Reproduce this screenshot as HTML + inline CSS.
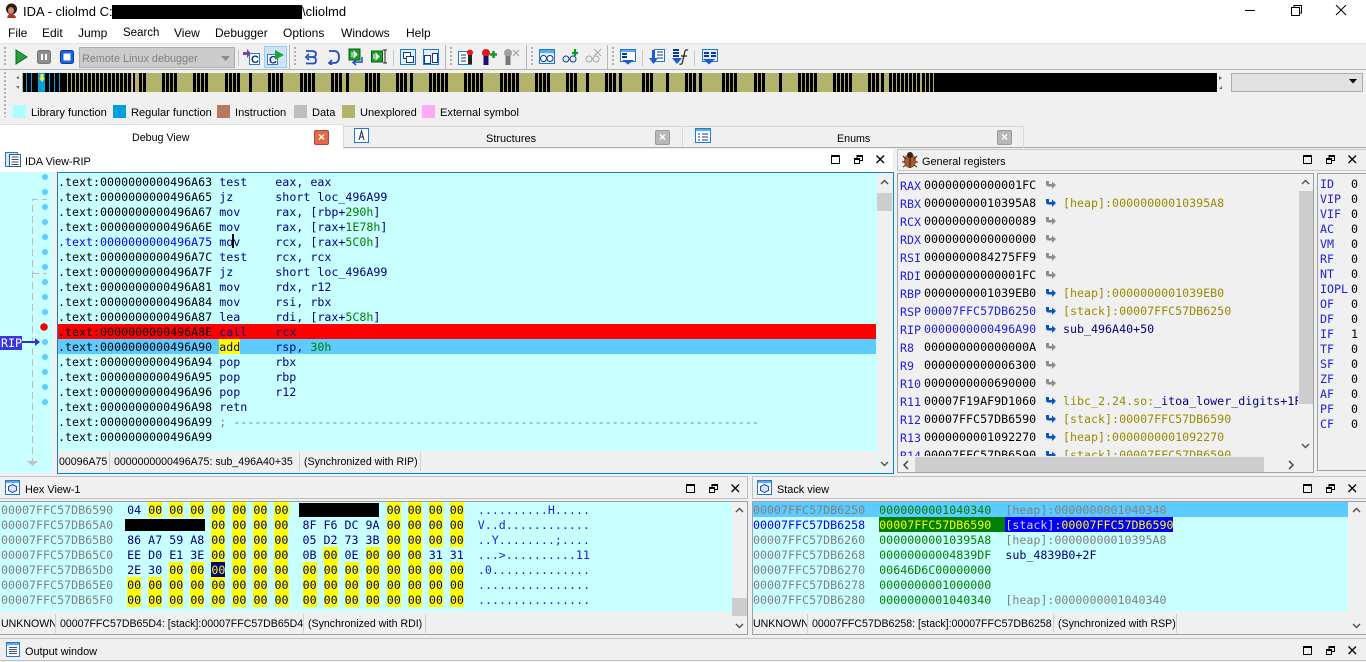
<!DOCTYPE html>
<html><head><meta charset="utf-8"><title>IDA</title>
<style>
html,body{margin:0;padding:0;background:#f0f0f0;overflow:hidden}
body{width:1366px;height:662px;position:relative;font:12px "Liberation Sans",sans-serif;color:#000}
.a,.t,svg,pre{position:absolute}
.t{white-space:nowrap;line-height:14px}
.s{font-size:10.600px}
.h{font-size:10.900px}
.l{font-size:11.100px}
pre{margin:0;font:11.65px/15px "DejaVu Sans Mono",monospace;color:#000}
pre i{font-style:normal;color:#808080}
pre u{text-decoration:none;color:#000080}
pre s{text-decoration:none;color:#008000}
pre b{font-weight:normal;background:#ff0;color:#000080;display:inline-block;height:15px;vertical-align:top;position:relative;top:-1px;line-height:17px}
pre em{font-style:normal;color:#2020e0}
pre q{quotes:none;color:#998a00}
.bar{position:absolute;top:0;height:19px;background:repeating-linear-gradient(90deg,#000 0 3px,#b3b36b 3px 4px)}
.bk{position:absolute;top:0;height:19px;background:#000}
.sq{position:absolute;top:105px;width:13px;height:13px}
.sep{position:absolute;top:50px;width:1px;height:16px;background:#c8c8c8}
.vb{position:absolute;top:45px;width:1px;height:24px;background:#b8b8b8}
.grip{position:absolute;width:2px;background:repeating-linear-gradient(180deg,#b0b0b0 0 2px,transparent 2px 4px)}
.cl{position:absolute;width:13px;height:13px;border:1px solid #9a9a9a;background:#b8b8b8;border-radius:2px;color:#fff;font:bold 12px/13px "Liberation Sans",sans-serif;text-align:center}
.sc{position:absolute;background:#f0f0f0}
.th{position:absolute;background:#cdcdcd}
.st{position:absolute;width:1px;background:#d0d0d0}
</style></head><body>
<svg width="0" height="0" style="left:0;top:0">
<defs>
<g id="mx" fill="none" stroke="#000"><rect x=".5" y=".5" width="8" height="8"/><path d="M0 1.500h9" stroke-width="1"/></g>
<g id="rs" fill="none" stroke="#000"><rect x=".5" y="3.500" width="5" height="5"/><path d="M3 3V.5h5.500v5H6M0 4.500h6M3 1.500h6"/></g>
<path id="xx" d="M.5.5l7.500 7.500M8 .5L.5 8" stroke="#000" stroke-width="1.300" fill="none"/>
<path id="ar" d="M0 2h3v3h3V2.500L10 6 6 10V7.500H2.500Q0 7.500 0 5z"/>
</defs></svg>

<!-- title bar -->
<div class="a" style="left:0;top:0;width:1366px;height:43px;background:#fff"></div>
<svg style="left:4px;top:3px" width="15" height="16"><ellipse cx="7.500" cy="6" rx="5.500" ry="5.500" fill="#2b1a14"/><ellipse cx="7" cy="7.500" rx="3" ry="3.500" fill="#c98a6f"/><path d="M3 15q1-5 5-4t4 4z" fill="#b5302a"/></svg>
<div class="t" style="left:23px;top:5px;font-size:13px">IDA - cliolmd C:\</div>
<div class="a" style="left:112px;top:5px;width:190px;height:14px;background:#000"></div>
<div class="t" style="left:302px;top:5px;font-size:13px">\cliolmd</div>
<svg style="left:1245px;top:5px" width="110" height="12"><path d="M0 5.500h10" stroke="#000"/><rect x="46.500" y="2.500" width="8" height="8" fill="none" stroke="#000"/><path d="M49 2.500V.5h7.500v7.500h-2" fill="none" stroke="#000"/><path d="M91 0l10 10M101 0L91 10" stroke="#000" fill="none"/></svg>
<div class="t" style="left:8px;top:26px">File</div><div class="t" style="left:42px;top:26px">Edit</div><div class="t" style="left:78px;top:26px">Jump</div><div class="t" style="left:123px;top:26px;font-size:11.500px">Search</div><div class="t" style="left:174px;top:26px">View</div><div class="t" style="left:215px;top:26px">Debugger</div><div class="t" style="left:283px;top:26px">Options</div><div class="t" style="left:341px;top:26px">Windows</div><div class="t" style="left:406px;top:26px">Help</div>

<!-- toolbar -->
<div class="a" style="left:0;top:43px;width:1366px;height:1px;background:#e4e4e4"></div>
<div class="a" style="left:0;top:69px;width:1366px;height:1px;background:#b4b4b4"></div>
<div class="grip" style="left:4px;top:47px;height:20px"></div>
<svg style="left:14px;top:49px" width="16" height="16"><path d="M2 1l11 7-11 7z" fill="#22a03a" stroke="#0a6a1e"/></svg>
<svg style="left:37px;top:50px" width="15" height="15"><rect x=".5" y=".5" width="13" height="13" rx="2" fill="#8e8e8e" stroke="#777"/><path d="M5 4v6M9 4v6" stroke="#fff" stroke-width="2"/></svg>
<svg style="left:60px;top:50px" width="15" height="15"><rect x=".5" y=".5" width="13" height="13" rx="2" fill="#1a62e8" stroke="#0c3aa0"/><rect x="3.500" y="3.500" width="7" height="7" fill="#fff"/></svg>
<div class="a" style="left:79px;top:47px;width:154px;height:19px;background:#cccccc;border:1px solid #adadad"></div>
<div class="t" style="left:82px;top:52px;color:#808080;font-size:10.850px">Remote Linux debugger</div>
<svg style="left:221px;top:56px" width="10" height="6"><path d="M0 0h9L4.500 5z" fill="#8a8a8a"/></svg>
<div class="sep" style="left:238px"></div>
<svg style="left:243px;top:49px" width="18" height="17"><rect x="6.500" y="4.500" width="10" height="11" fill="#fff" stroke="#2a7ad0"/><text x="8" y="14" font-family="Liberation Sans" font-weight="bold" font-size="11" fill="#102a90">C</text><path d="M0 3h4V0l4 4.500L4 9V6H0z" fill="#8040a0"/></svg>
<div class="a" style="left:264px;top:46px;width:21px;height:20px;background:#cce4f7;border:1px solid #99cdf0"></div>
<svg style="left:267px;top:49px" width="20" height="17"><rect x=".5" y="5.500" width="10" height="10" fill="#fff" stroke="#2a7ad0"/><text x="2" y="14.500" font-family="Liberation Sans" font-weight="bold" font-size="11" fill="#102a90">C</text><path d="M8 1l9 5-9 5z" fill="#22a03a"/></svg>
<div class="vb" style="left:289px"></div>
<div class="grip" style="left:294px;top:47px;height:20px"></div>
<svg style="left:303px;top:49px" width="16" height="16" fill="none" stroke="#1e50c0" stroke-width="1.800"><path d="M3 2h6q4 0 4 3t-4 3H5M9 8q4 0 4 3.500T9 14.500H3M6 5L3 8l3 3"/></svg>
<svg style="left:326px;top:49px" width="16" height="16" fill="none" stroke="#1e50c0" stroke-width="1.800"><path d="M3 2h5q5 0 5 6t-5 6H3M6 11l-3 3 3 2"/></svg>
<svg style="left:348px;top:48px" width="18" height="18"><rect x="1" y="1" width="11" height="11" fill="#1aa02a" stroke="#0a5a12"/><path d="M4 4v5M6 3.500l3 3-3 3z" fill="#fff" stroke="#fff"/><path d="M14 9v5H6M8 12l-3 2.500L8 17" fill="none" stroke="#1e50c0" stroke-width="1.500"/></svg>
<svg style="left:371px;top:49px" width="17" height="16"><rect x="0.500" y="2" width="11" height="11" fill="#1aa02a" stroke="#0a5a12"/><path d="M3 5v5M5 4.500l3 3-3 3z" fill="#fff" stroke="#fff"/><path d="M12 1h4M14 1v13M12 14h4" stroke="#222" fill="none"/></svg>
<div class="sep" style="left:393px"></div>
<svg style="left:400px;top:49px" width="17" height="17"><rect x=".5" y=".5" width="15" height="15" fill="#e4f0fc" stroke="#1c7ad6"/><rect x="3.500" y="3.500" width="7" height="6" fill="#fff" stroke="#103a90"/><rect x="6.500" y="7.500" width="7" height="6" fill="#fff" stroke="#103a90"/></svg>
<svg style="left:423px;top:49px" width="17" height="17"><rect x=".5" y=".5" width="15" height="15" fill="#e4f0fc" stroke="#1c7ad6"/><rect x="1.500" y="6.500" width="6" height="8" fill="#fff" stroke="#103a90"/><rect x="9.500" y="4.500" width="5" height="9" fill="#fff" stroke="#103a90"/></svg>
<div class="vb" style="left:445px"></div>
<div class="grip" style="left:450px;top:47px;height:20px"></div>
<svg style="left:458px;top:49px" width="17" height="17"><rect x=".5" y="2.500" width="13" height="13" fill="#fff" stroke="#1c7ad6"/><path d="M3 6h5M3 9h5M3 12h5" stroke="#103a90"/><circle cx="12" cy="3.500" r="3" fill="#e01818"/><rect x="10" y="6" width="4" height="9" fill="#222"/></svg>
<svg style="left:481px;top:48px" width="17" height="18"><circle cx="5" cy="5" r="4" fill="#e01818"/><rect x="2.500" y="8" width="5" height="9" fill="#141470"/><path d="M9 6.500h7M12.500 3v7" stroke="#0a9a20" stroke-width="2.500"/></svg>
<svg style="left:503px;top:48px" width="18" height="18"><circle cx="5" cy="5" r="4" fill="#a0a0a0"/><rect x="2.500" y="8" width="5" height="9" fill="#777"/><path d="M10 2l6 6M16 2l-6 6" stroke="#aaa" stroke-width="1.300"/></svg>
<div class="vb" style="left:526px"></div>
<div class="grip" style="left:531px;top:47px;height:20px"></div>
<svg style="left:539px;top:49px" width="17" height="16" fill="none"><rect x=".5" y=".5" width="15" height="14" fill="#dcecfb" stroke="#1c7ad6"/><rect x="1" y="1" width="14" height="3" fill="#5aaaf0"/><circle cx="4.500" cy="9.500" r="3" stroke="#103a90" fill="#fff"/><circle cx="11" cy="9.500" r="3" stroke="#103a90" fill="#fff"/></svg>
<svg style="left:562px;top:48px" width="17" height="17" fill="none"><circle cx="4" cy="11" r="3" stroke="#103a90"/><circle cx="11" cy="11" r="3" stroke="#103a90"/><path d="M10 5h6M13 1v7" stroke="#0a9a20" stroke-width="2.200"/></svg>
<svg style="left:585px;top:48px" width="17" height="17" fill="none" stroke="#a8a8a8"><circle cx="4" cy="11" r="3"/><circle cx="11" cy="11" r="3"/><path d="M9 1l7 7M16 1l-7 7"/></svg>
<div class="vb" style="left:607px"></div>
<div class="grip" style="left:612px;top:47px;height:20px"></div>
<svg style="left:620px;top:49px" width="16" height="16"><rect x=".5" y=".5" width="15" height="12" fill="#fff" stroke="#1c7ad6"/><rect x="1" y="1" width="14" height="2" fill="#5aaaf0"/><path d="M2 5h5M2 8h5" stroke="#103a90" stroke-width="2"/><path d="M2 11h12l-6 4.500z" fill="#1c5ad6"/></svg>
<div class="sep" style="left:642px"></div>
<svg style="left:649px;top:49px" width="17" height="17"><rect x="5.500" y=".5" width="10" height="12" fill="#fff" stroke="#1c7ad6"/><path d="M8 3h6M8 6h6M8 9h6" stroke="#103a90"/><rect x="3" y="1" width="3" height="9" fill="#1c5ad6"/><path d="M0 9h9l-4.500 6z" fill="#1c5ad6"/></svg>
<svg style="left:672px;top:48px" width="17" height="18"><path d="M1 2h6M1 5h6M1 8h6" stroke="#103a90" stroke-width="2"/><path d="M0 10h10l-5 6z" fill="#1c5ad6"/><path d="M16 2q-3-1-3.500 3l-2 9q-.5 3-3 2M9 8h6" fill="none" stroke="#222" stroke-width="1.200"/></svg>
<div class="sep" style="left:694px"></div>
<svg style="left:702px;top:49px" width="16" height="17"><rect x=".5" y=".5" width="15" height="12" fill="#dcecfb" stroke="#1c7ad6"/><path d="M2 4h5M2 7h5M9 4h5M9 7h5" stroke="#103a90" stroke-width="2"/><path d="M1 10h12l-6 5.500z" fill="#1c5ad6"/></svg>

<!-- navigator -->
<div class="grip" style="left:4px;top:72px;height:45px"></div>
<svg style="left:16px;top:76px" width="4" height="14"><path d="M0 2l3-2v3zM0 10h3v3z" fill="#666"/></svg>
<div class="a" style="left:22px;top:73px;width:1195px;height:19px;background:#b3b36b;overflow:hidden">
<div class="bk" style="left:1px;width:44px"></div>
<div class="a" style="left:4px;top:0;width:1px;height:19px;background:#00a0e0"></div>
<div class="a" style="left:9px;top:0;width:1px;height:19px;background:#00a0e0"></div>
<div class="a" style="left:16px;top:0;width:7px;height:19px;background:#00a0e0"></div>
<div class="a" style="left:27px;top:0;width:1px;height:19px;background:#00a0e0"></div>
<div class="a" style="left:32px;top:0;width:1px;height:19px;background:#00a0e0"></div>
<div class="a" style="left:37px;top:0;width:1px;height:19px;background:#00a0e0"></div>
<svg style="left:17px;top:1px" width="6" height="8"><path d="M1.500 0h3v4H6L3 8 0 4h1.500z" fill="#ffe838"/></svg>
<div class="bar" style="left:46px;width:68px"></div>
<div class="a" style="left:110px;top:0;width:1px;height:19px;background:#ffa8f8"></div>
<div class="bar" style="left:117px;width:7px"></div><div class="bar" style="left:140px;width:15px"></div><div class="bar" style="left:171px;width:15px"></div><div class="bar" style="left:203px;width:15px"></div><div class="bk" style="left:227px;width:3px"></div><div class="bar" style="left:246px;width:15px"></div><div class="bar" style="left:278px;width:15px"></div><div class="bar" style="left:309px;width:11px"></div><div class="bk" style="left:324px;width:3px"></div><div class="bar" style="left:343px;width:15px"></div><div class="bar" style="left:374px;width:11px"></div><div class="bk" style="left:388px;width:3px"></div><div class="bar" style="left:407px;width:19px"></div><div class="bar" style="left:442px;width:19px"></div><div class="bar" style="left:478px;width:19px"></div><div class="bar" style="left:513px;width:15px"></div><div class="bar" style="left:544px;width:11px"></div><div class="bk" style="left:564px;width:3px"></div><div class="bar" style="left:583px;width:11px"></div><div class="bk" style="left:597px;width:3px"></div><div class="bar" style="left:620px;width:11px"></div><div class="bk" style="left:644px;width:3px"></div><div class="bar" style="left:663px;width:11px"></div><div class="bk" style="left:677px;width:3px"></div><div class="bar" style="left:700px;width:15px"></div><div class="bar" style="left:732px;width:11px"></div><div class="bk" style="left:757px;width:3px"></div><div class="bar" style="left:776px;width:19px"></div><div class="bar" style="left:811px;width:19px"></div><div class="bar" style="left:846px;width:11px"></div><div class="bk" style="left:859px;width:3px"></div><div class="bar" style="left:867px;width:31px"></div><div class="bar" style="left:900px;width:11px"></div><div class="bk" style="left:912px;width:283px"></div>
</div>
<svg style="left:1219px;top:76px" width="4" height="14"><path d="M0 0l3 2-3 2zM0 13l3-3v3z" fill="#666"/></svg>
<div class="a" style="left:1231px;top:73px;width:130px;height:17px;background:#e1e1e1;border:1px solid #adadad"></div>
<svg style="left:1349px;top:79px" width="9" height="6"><path d="M0 0h8L4 4.500z" fill="#000"/></svg>

<!-- legend -->
<div class="sq" style="left:13px;background:#aaffff"></div><div class="t l" style="left:31px;top:106px">Library function</div>
<div class="sq" style="left:113px;background:#00a0e0"></div><div class="t l" style="left:131px;top:106px">Regular function</div>
<div class="sq" style="left:217px;background:#b87a5c"></div><div class="t l" style="left:235px;top:106px">Instruction</div>
<div class="sq" style="left:294px;background:#bebebe"></div><div class="t l" style="left:312px;top:106px">Data</div>
<div class="sq" style="left:342px;background:#b3b36b"></div><div class="t l" style="left:360px;top:106px">Unexplored</div>
<div class="sq" style="left:422px;background:#ffa8f8"></div><div class="t l" style="left:440px;top:106px">External symbol</div>

<!-- tabs -->
<div class="a" style="left:0;top:147px;width:1366px;height:1px;background:#a8a8a8"></div>
<div class="a" style="left:343px;top:126px;width:680px;height:21px;border-top:1px solid #d8d8d8;border-right:1px solid #d8d8d8"></div>
<div class="a" style="left:682px;top:126px;width:1px;height:21px;background:#d8d8d8"></div>
<div class="a" style="left:0;top:124px;width:343px;height:24px;background:#fff;border-right:1px solid #d8d8d8;border-top:1px solid #e0e0e0"></div>
<div class="t" style="left:132px;top:131px;font-size:10.700px">Debug View</div>
<div class="cl" style="left:314px;top:130px;background:#e4694a;border-color:#b04a30">×</div>
<svg style="left:354px;top:128px" width="16" height="16"><rect x=".5" y=".5" width="14" height="14" fill="#fff" stroke="#1c7ad6"/><path d="M5 12L7.500 3 10 12M6 9h3" fill="none" stroke="#102a60"/></svg>
<div class="t" style="left:486px;top:132px;font-size:11px">Structures</div>
<div class="cl" style="left:655px;top:130px">×</div>
<svg style="left:695px;top:128px" width="17" height="16"><rect x=".5" y=".5" width="15" height="14" fill="#fff" stroke="#1c7ad6"/><rect x="1" y="1" width="14" height="2" fill="#5aaaf0"/><path d="M3 6h2M7 6h6M3 9h2M7 9h6M3 12h2M7 12h6" stroke="#103a90"/></svg>
<div class="t" style="left:837px;top:132px;font-size:10.700px">Enums</div>
<div class="cl" style="left:997px;top:130px">×</div>

<!-- IDA view header -->
<div class="a" style="left:0;top:149px;width:893px;height:23px;background:#fff"></div>
<svg style="left:5px;top:152px" width="17" height="16"><rect x=".5" y=".5" width="12" height="14" fill="#d8e8f8" stroke="#1c7ad6"/><rect x="4.500" y="2.500" width="11" height="12" fill="#fff" stroke="#3a5a90"/><path d="M6.500 5h7M6.500 7.500h7M6.500 10h7M6.500 12.500h7" stroke="#405070"/></svg>
<div class="t h" style="left:25px;top:155px">IDA View-RIP</div>
<svg style="left:831px;top:155px" width="10" height="10"><use href="#mx"/></svg>
<svg style="left:854px;top:155px" width="10" height="10"><use href="#rs"/></svg>
<svg style="left:876px;top:155px" width="10" height="10"><use href="#xx"/></svg>

<!-- gutter -->
<div class="a" style="left:0;top:172px;width:52px;height:301px;background:#c8ffff"></div>
<svg style="left:0;top:172px" width="57" height="301">
<path d="M47 27.500H42M38 27.500H32.500V290" fill="none" stroke="#c4b8b8" stroke-dasharray="7 4"/>
<path d="M33 101.500h14" stroke="#c4b8b8" stroke-dasharray="6 4"/>
<path d="M27 289h11l-5.500 5z" fill="#c0c0c0"/>
<g fill="#60ccff"><circle cx="45" cy="5" r="3"/><circle cx="45" cy="20" r="3"/><circle cx="45" cy="35" r="3"/><circle cx="45" cy="50" r="3"/><circle cx="45" cy="65" r="3"/><circle cx="45" cy="80" r="3"/><circle cx="45" cy="95" r="3"/><circle cx="45" cy="110" r="3"/><circle cx="45" cy="125" r="3"/><circle cx="45" cy="140" r="3"/><circle cx="45" cy="170" r="3"/><circle cx="45" cy="185" r="3"/><circle cx="45" cy="200" r="3"/><circle cx="45" cy="215" r="3"/><circle cx="45" cy="230" r="3"/></g>
<circle cx="44" cy="155" r="3.800" fill="#f00000"/>
<path d="M22 169h13v-3l5 4-5 4v-3H22z" fill="#3030d8"/>
</svg>
<div class="a" style="left:0;top:336px;width:22px;height:14px;background:#3838e0"></div>
<div class="t" style="left:1px;top:336px;color:#fff;font:11.650px/14px 'DejaVu Sans Mono',monospace">RIP</div>

<!-- IDA view -->
<div class="a" style="left:57px;top:172px;width:835px;height:300px;border:1px solid #1c7ac8;background:#c8ffff"></div>
<div class="a" style="left:58px;top:324px;width:818px;height:15px;background:#ff0000"></div>
<div class="a" style="left:58px;top:339px;width:818px;height:15px;background:#5ccbff"></div>
<pre style="left:58px;top:175px">.text:0000000000496A63 <u>test</u>    <u>eax, eax</u>
.text:0000000000496A65 <u>jz</u>      <u>short loc_496A99</u>
.text:0000000000496A67 <u>mov</u>     <u>rax, [rbp+</u><s>290h</s><u>]</u>
.text:0000000000496A6E <u>mov</u>     <u>rax, [rax+</u><s>1E78h</s><u>]</u>
<em style="color:#0000ff">.text:0000000000496A75</em> <u>mov</u>     <u>rcx, [rax+</u><s>5C0h</s><u>]</u>
.text:0000000000496A7C <u>test</u>    <u>rcx, rcx</u>
.text:0000000000496A7F <u>jz</u>      <u>short loc_496A99</u>
.text:0000000000496A81 <u>mov</u>     <u>rdx, r12</u>
.text:0000000000496A84 <u>mov</u>     <u>rsi, rbx</u>
.text:0000000000496A87 <u>lea</u>     <u>rdi, [rax+</u><s>5C8h</s><u>]</u>
.text:0000000000496A8E <u>call</u>    <u>rcx</u>
.text:0000000000496A90 <b>add</b>     <u>rsp, </u><s>30h</s>
.text:0000000000496A94 <u>pop</u>     <u>rbx</u>
.text:0000000000496A95 <u>pop</u>     <u>rbp</u>
.text:0000000000496A96 <u>pop</u>     <u>r12</u>
.text:0000000000496A98 <u>retn</u>
.text:0000000000496A99 <i>; ---------------------------------------------------------------------------</i>
.text:0000000000496A99</pre>
<div class="a" style="left:232px;top:234px;width:2px;height:14px;background:#000"></div>
<div class="a" style="left:58px;top:451px;width:818px;height:21px;background:#f0f0f0"></div>
<div class="t s" style="left:59px;top:455px">00096A75</div><div class="st" style="left:109px;top:452px;height:19px"></div>
<div class="t s" style="left:114px;top:455px">0000000000496A75: sub_496A40+35</div><div class="st" style="left:299px;top:452px;height:19px"></div>
<div class="t s" style="left:304px;top:455px">(Synchronized with RIP)</div><div class="st" style="left:420px;top:452px;height:19px"></div>
<div class="sc" style="left:877px;top:173px;width:15px;height:299px"></div>
<div class="th" style="left:877px;top:193px;width:15px;height:18px"></div>
<svg style="left:877px;top:178px" width="15" height="8"><path d="M4 6l3.500-3.500L11 6" fill="none" stroke="#555" stroke-width="1.500"/></svg>
<svg style="left:877px;top:460px" width="15" height="8"><path d="M4 2l3.500 3.500L11 2" fill="none" stroke="#555" stroke-width="1.500"/></svg>

<!-- General registers -->
<div class="a" style="left:897px;top:149px;width:469px;height:22px;border:1px solid #c8c8c8;border-width:1px 0 1px 1px;box-sizing:border-box"></div>
<svg style="left:902px;top:151px" width="16" height="18"><ellipse cx="8" cy="10" rx="6" ry="7" fill="#a85a30"/><circle cx="8" cy="4" r="3" fill="#3a2010"/><path d="M8 3v14M1 5l3 3M15 5l-3 3M0 11h3M13 11h3M1 16l3-2M15 16l-3-2" stroke="#2a1a10" fill="none"/></svg>
<div class="t h" style="left:922px;top:155px">General registers</div>
<svg style="left:1303px;top:155px" width="10" height="10"><use href="#mx"/></svg>
<svg style="left:1326px;top:155px" width="10" height="10"><use href="#rs"/></svg>
<svg style="left:1348px;top:155px" width="10" height="10"><use href="#xx"/></svg>
<div class="a" style="left:897px;top:173px;width:415px;height:298px;border:1px solid #a0a0a0;overflow:hidden">
<pre style="left:2px;top:3px;line-height:18px"><em>RAX</em>
<em>RBX</em>
<em>RCX</em>
<em>RDX</em>
<em>RSI</em>
<em>RDI</em>
<em>RBP</em>
<em>RSP</em>
<em>RIP</em>
<em>R8</em>
<em>R9</em>
<em>R10</em>
<em>R11</em>
<em>R12</em>
<em>R13</em>
<em>R14</em></pre>
<pre style="left:26px;top:2px;line-height:18px">00000000000001FC
00000000010395A8
0000000000000089
0000000000000000
0000000084275FF9
00000000000001FC
0000000001039EB0
<em>00007FFC57DB6250</em>
<em>0000000000496A90</em>
000000000000000A
0000000000006300
0000000000690000
00007F19AF9D1060
00007FFC57DB6590
0000000001092270
00007FFC57DB6590</pre>
<pre style="left:165px;top:2px;line-height:18px;width:235px;overflow:hidden">

<q>[heap]:00000000010395A8</q>




<q>[heap]:0000000001039EB0</q>
<q>[stack]:00007FFC57DB6250</q>
<u>sub_496A40+50</u>



<q>libc_2.24.so:</q><u>_itoa_lower_digits+1F</u>
<q>[stack]:00007FFC57DB6590</q>
<q>[heap]:0000000001092270</q>
<q>[stack]:00007FFC57DB6590</q></pre>
<svg style="left:148px;top:5px" width="12" height="284">
<g fill="#8c8c8c"><use href="#ar" y="0"/><use href="#ar" y="36"/><use href="#ar" y="54"/><use href="#ar" y="72"/><use href="#ar" y="90"/><use href="#ar" y="162"/><use href="#ar" y="180"/><use href="#ar" y="198"/></g>
<g fill="#0a52c8"><use href="#ar" y="18"/><use href="#ar" y="108"/><use href="#ar" y="126"/><use href="#ar" y="144"/><use href="#ar" y="216"/><use href="#ar" y="234"/><use href="#ar" y="252"/><use href="#ar" y="270"/></g>
</svg>
<div class="a" style="left:0;top:282px;width:415px;height:16px;background:#f0f0f0"></div>
<div class="sc" style="left:400px;top:0;width:15px;height:282px"></div>
<div class="th" style="left:401px;top:17px;width:14px;height:213px"></div>
<div class="th" style="left:17px;top:283px;width:349px;height:15px"></div>
<svg style="left:400px;top:4px" width="15" height="8"><path d="M4 6l3.500-3.500L11 6" fill="none" stroke="#555" stroke-width="1.500"/></svg>
<svg style="left:400px;top:268px" width="15" height="8"><path d="M4 2l3.500 3.500L11 2" fill="none" stroke="#555" stroke-width="1.500"/></svg>
<svg style="left:4px;top:286px" width="10" height="10"><path d="M6 1L2 5l4 4" fill="none" stroke="#444" stroke-width="1.500"/></svg>
<svg style="left:388px;top:286px" width="10" height="10"><path d="M3 1l4 4-4 4" fill="none" stroke="#444" stroke-width="1.500"/></svg>
</div>
<!-- flags -->
<div class="a" style="left:1317px;top:173px;width:49px;height:298px;border:1px solid #a0a0a0;border-right:0;box-sizing:border-box"></div>
<pre style="left:1320px;top:177px"><em>ID</em>
<em>VIP</em>
<em>VIF</em>
<em>AC</em>
<em>VM</em>
<em>RF</em>
<em>NT</em>
<em>IOPL</em>
<em>OF</em>
<em>DF</em>
<em>IF</em>
<em>TF</em>
<em>SF</em>
<em>ZF</em>
<em>AF</em>
<em>PF</em>
<em>CF</em></pre>
<pre style="left:1351px;top:177px">0
0
0
0
0
0
0
0
0
0
1
0
0
0
0
0
0</pre>

<!-- Hex view -->
<div class="a" style="left:0;top:476px;width:748px;height:23px;border:1px solid #c0c0c0;border-width:1px 1px 1px 0;box-sizing:border-box"></div>
<svg style="left:5px;top:480px" width="16" height="16"><rect x=".5" y=".5" width="14" height="14" fill="#fff" stroke="#1c7ad6"/><rect x="1" y="1" width="13" height="2" fill="#5aaaf0"/><path d="M7.500 4.500l4 2v4l-4 2-4-2v-4z" fill="#d8e4fc" stroke="#2040c0"/></svg>
<div class="t h" style="left:25px;top:483px">Hex View-1</div>
<svg style="left:686px;top:484px" width="10" height="10"><use href="#mx"/></svg>
<svg style="left:709px;top:484px" width="10" height="10"><use href="#rs"/></svg>
<svg style="left:731px;top:484px" width="10" height="10"><use href="#xx"/></svg>
<div class="a" style="left:0;top:501px;width:748px;height:134px;border:1px solid #a0a0a0;border-width:1px 1px 1px 0;box-sizing:border-box;background:#f0f0f0"></div>
<div class="a" style="left:0;top:502px;width:732px;height:110px;background:#c8ffff"></div>
<pre style="left:1px;top:503px;color:#000080"><i>00007FFC57DB6590</i>  04 <b>00</b> <b>00</b> <b>00</b> <b>00</b> <b>00</b> <b>00</b> <b>00</b>              <b>00</b> <b>00</b> <b>00</b> <b>00</b>  <em>..........H.....</em>
<i>00007FFC57DB65A0</i>              <b>00</b> <b>00</b> <b>00</b> <b>00</b>  8F F6 DC 9A <b>00</b> <b>00</b> <b>00</b> <b>00</b>  <em>V..d............</em>
<i>00007FFC57DB65B0</i>  86 A7 59 A8 <b>00</b> <b>00</b> <b>00</b> <b>00</b>  05 D2 73 3B <b>00</b> <b>00</b> <b>00</b> <b>00</b>  <em>..Y........;....</em>
<i>00007FFC57DB65C0</i>  EE D0 E1 3E <b>00</b> <b>00</b> <b>00</b> <b>00</b>  0B <b>00</b> 0E <b>00</b> <b>00</b> <b>00</b> 31 31  <em>...&gt;..........11</em>
<i>00007FFC57DB65D0</i>  2E 30 <b>00</b> <b>00</b> <b style="background:#000080;color:#ff0">00</b> <b>00</b> <b>00</b> <b>00</b>  <b>00</b> <b>00</b> <b>00</b> <b>00</b> <b>00</b> <b>00</b> <b>00</b> <b>00</b>  <em>.0..............</em>
<i>00007FFC57DB65E0</i>  <b>00</b> <b>00</b> <b>00</b> <b>00</b> <b>00</b> <b>00</b> <b>00</b> <b>00</b>  <b>00</b> <b>00</b> <b>00</b> <b>00</b> <b>00</b> <b>00</b> <b>00</b> <b>00</b>  <em>................</em>
<i>00007FFC57DB65F0</i>  <b>00</b> <b>00</b> <b>00</b> <b>00</b> <b>00</b> <b>00</b> <b>00</b> <b>00</b>  <b>00</b> <b>00</b> <b>00</b> <b>00</b> <b>00</b> <b>00</b> <b>00</b> <b>00</b>  <em>................</em></pre>
<div class="a" style="left:299px;top:503px;width:80px;height:14px;background:#000"></div>
<div class="a" style="left:125px;top:519px;width:80px;height:12px;background:#000"></div>
<div class="t s" style="left:1px;top:617px">UNKNOWN</div><div class="st" style="left:55px;top:614px;height:19px"></div>
<div class="t s" style="left:60px;top:617px">00007FFC57DB65D4: [stack]:00007FFC57DB65D4</div><div class="st" style="left:303px;top:614px;height:19px"></div>
<div class="t s" style="left:308px;top:617px">(Synchronized with RDI)</div><div class="st" style="left:425px;top:614px;height:19px"></div>
<div class="th" style="left:732px;top:598px;width:15px;height:18px"></div>
<svg style="left:732px;top:506px" width="15" height="8"><path d="M4 6l3.500-3.500L11 6" fill="none" stroke="#555" stroke-width="1.500"/></svg>
<svg style="left:732px;top:622px" width="15" height="8"><path d="M4 2l3.500 3.500L11 2" fill="none" stroke="#555" stroke-width="1.500"/></svg>

<!-- Stack view -->
<div class="a" style="left:752px;top:476px;width:614px;height:23px;border:1px solid #c0c0c0;border-width:1px 0 1px 1px;box-sizing:border-box"></div>
<svg style="left:757px;top:480px" width="16" height="16"><rect x=".5" y=".5" width="14" height="14" fill="#fff" stroke="#1c7ad6"/><rect x="1" y="1" width="13" height="2" fill="#5aaaf0"/><path d="M7.500 4.500l4 2v4l-4 2-4-2v-4z" fill="#d8e4fc" stroke="#2040c0"/></svg>
<div class="t h" style="left:777px;top:483px">Stack view</div>
<svg style="left:1303px;top:484px" width="10" height="10"><use href="#mx"/></svg>
<svg style="left:1326px;top:484px" width="10" height="10"><use href="#rs"/></svg>
<svg style="left:1348px;top:484px" width="10" height="10"><use href="#xx"/></svg>
<div class="a" style="left:752px;top:501px;width:614px;height:134px;border:1px solid #a0a0a0;border-width:1px 0 1px 1px;box-sizing:border-box;background:#f0f0f0"></div>
<div class="a" style="left:753px;top:502px;width:595px;height:110px;background:#c8ffff"></div>
<div class="a" style="left:753px;top:502px;width:595px;height:15px;background:#5ccbff"></div>
<div class="a" style="left:879px;top:517px;width:126px;height:15px;background:#008000"></div>
<div class="a" style="left:1005px;top:517px;width:168px;height:15px;background:#0000ff"></div>
<pre style="left:753px;top:503px"><i>00007FFC57DB6250</i>  <s>0000000001040340</s>  <i>[heap]:0000000001040340</i>
<em style="color:#0000ff">00007FFC57DB6258</em>  <span style="color:#ff0">00007FFC57DB6590</span>  <span style="color:#d8d8d8">[stack]</span><span style="color:#ff0">:00007FFC57DB6590</span>
<i>00007FFC57DB6260</i>  <s>00000000010395A8</s>  <i>[heap]:00000000010395A8</i>
<i>00007FFC57DB6268</i>  <s>00000000004839DF</s>  <u>sub_4839B0+2F</u>
<i>00007FFC57DB6270</i>  <s>00646D6C00000000</s>
<i>00007FFC57DB6278</i>  <s>0000000001000000</s>
<i>00007FFC57DB6280</i>  <s>0000000001040340</s>  <i>[heap]:0000000001040340</i></pre>
<div class="t s" style="left:753px;top:617px">UNKNOWN</div><div class="st" style="left:807px;top:614px;height:19px"></div>
<div class="t s" style="left:812px;top:617px">00007FFC57DB6258: [stack]:00007FFC57DB6258</div><div class="st" style="left:1053px;top:614px;height:19px"></div>
<div class="t s" style="left:1058px;top:617px">(Synchronized with RSP)</div><div class="st" style="left:1176px;top:614px;height:19px"></div>
<svg style="left:1349px;top:506px" width="15" height="8"><path d="M4 6l3.500-3.500L11 6" fill="none" stroke="#555" stroke-width="1.500"/></svg>
<svg style="left:1349px;top:622px" width="15" height="8"><path d="M4 2l3.500 3.500L11 2" fill="none" stroke="#555" stroke-width="1.500"/></svg>

<!-- Output -->
<div class="a" style="left:0;top:638px;width:1366px;border-top:1px solid #c0c0c0;border-bottom:1px solid #c0c0c0;box-sizing:border-box;height:23px"></div>
<svg style="left:6px;top:642px" width="15" height="16"><rect x=".5" y=".5" width="13" height="14" fill="#fff" stroke="#1c7ad6"/><rect x="1" y="1" width="12" height="2" fill="#5aaaf0"/><path d="M3 5.500h8M3 7.500h8M3 9.500h8M3 11.500h8" stroke="#405070"/></svg>
<div class="t h" style="left:25px;top:645px">Output window</div>
<svg style="left:1303px;top:646px" width="10" height="10"><use href="#mx"/></svg>
<svg style="left:1326px;top:646px" width="10" height="10"><use href="#rs"/></svg>
<svg style="left:1348px;top:646px" width="10" height="10"><use href="#xx"/></svg>
</body></html>
